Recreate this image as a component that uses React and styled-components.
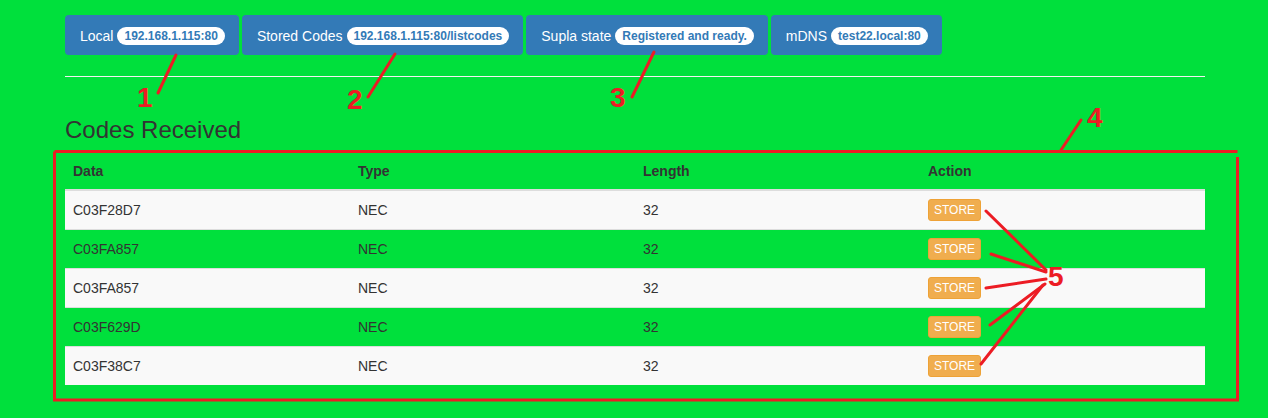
import React from "react";
import styled, { createGlobalStyle } from "styled-components";

const Global = createGlobalStyle`
  html, body { margin: 0; padding: 0; }
  body {
    background: #00e03c;
    font-family: "Liberation Sans", Arial, sans-serif;
    font-size: 14px;
    line-height: 20px;
    color: #333;
  }
`;

const Page = styled.div`
  position: relative;
  width: 1268px;
  height: 418px;
  overflow: hidden;
`;

const Container = styled.div`
  width: 1140px;
  margin-left: 65px;
  padding-top: 15px;
`;

const Nav = styled.div`
  display: flex;
  gap: 3px;
`;

const NavButton = styled.div`
  display: flex;
  align-items: center;
  gap: 4px;
  height: 40px;
  box-sizing: border-box;
  padding: 1px 14px 0 15px;
  background: #337ab7;
  border-radius: 4px;
  color: #fff;
  font-size: 14px;
  white-space: nowrap;
`;

const Badge = styled.span`
  display: inline-block;
  height: 18px;
  box-sizing: border-box;
  padding: 0 7px;
  margin-top: 1px;
  background: #fff;
  color: #337ab7;
  border-radius: 10px;
  font-size: 12px;
  font-weight: bold;
  line-height: 18px;
`;

const Rule = styled.hr`
  margin: 21px 0 0;
  border: 0;
  border-top: 1px solid #f2f2f2;
`;

const Title = styled.h3`
  margin: 40px 0 8px;
  font-size: 24px;
  font-weight: 500;
  line-height: 26.4px;
  color: #333;
`;

const Table = styled.table`
  width: 1140px;
  border-collapse: collapse;
  table-layout: fixed;
`;

const Th = styled.th`
  text-align: left;
  padding: 10px 8px 8px;
  line-height: 20px;
  font-weight: bold;
  border-bottom: 2px solid #dddddd;
`;

const Row = styled.tr`
  background: ${(p) => (p.$striped ? "#f9f9f9" : "transparent")};
`;

const Td = styled.td`
  padding: 8px;
  line-height: 22px;
  vertical-align: top;
  border-top: 1px solid #dddddd;
`;

const StoreButton = styled.span`
  display: inline-block;
  vertical-align: top;
  height: 22px;
  box-sizing: border-box;
  padding: 0 5px;
  background: #f0ad4e;
  border: 1px solid #eea236;
  border-radius: 3px;
  color: #fff;
  font-size: 12px;
  line-height: 20px;
`;

const Overlay = styled.svg`
  position: absolute;
  left: 0;
  top: 0;
  pointer-events: none;
`;

const Num = styled.text`
  font-family: "Liberation Sans", Arial, sans-serif;
  font-weight: bold;
  font-size: 28px;
  fill: #ec1c24;
`;

const links = [
  { label: "Local", value: "192.168.1.115:80" },
  { label: "Stored Codes", value: "192.168.1.115:80/listcodes" },
  { label: "Supla state", value: "Registered and ready." },
  { label: "mDNS", value: "test22.local:80" },
];

const codes = [
  ["C03F28D7", "NEC", "32"],
  ["C03FA857", "NEC", "32"],
  ["C03FA857", "NEC", "32"],
  ["C03F629D", "NEC", "32"],
  ["C03F38C7", "NEC", "32"],
];

const lines = [
  [176, 55, 158, 93],
  [395, 54, 368, 97],
  [654, 52, 632, 97],
  [1081, 120, 1061, 150],
  [986, 211, 1046, 270],
  [991, 254, 1046, 272],
  [986, 288, 1046, 279],
  [990, 325, 1045, 284],
  [981, 364, 1043, 285],
];

export default function App() {
  return (
    <>
      <Global />
      <Page>
        <Container>
          <Nav>
            {links.map((l) => (
              <NavButton key={l.label}>
                {l.label}
                <Badge>{l.value}</Badge>
              </NavButton>
            ))}
          </Nav>
          <Rule />
          <Title>Codes Received</Title>
          <Table>
            <thead>
              <tr>
                <Th>Data</Th>
                <Th>Type</Th>
                <Th>Length</Th>
                <Th>Action</Th>
              </tr>
            </thead>
            <tbody>
              {codes.map((c, i) => (
                <Row key={i} $striped={i % 2 === 0}>
                  <Td>{c[0]}</Td>
                  <Td>{c[1]}</Td>
                  <Td>{c[2]}</Td>
                  <Td>
                    <StoreButton>STORE</StoreButton>
                  </Td>
                </Row>
              ))}
            </tbody>
          </Table>
        </Container>
        <Overlay width="1268" height="418" viewBox="0 0 1268 418">
          <g stroke="#ec1c24" strokeWidth="3" fill="none" strokeLinecap="round">
            {lines.map((l, i) => (
              <line key={i} x1={l[0]} y1={l[1]} x2={l[2]} y2={l[3]} />
            ))}
          </g>
          <path
            d="M54.5 151.5 H1237.5 M1237.5 157 V400 H54.5 V151.5"
            stroke="#ec1c24"
            strokeWidth="3"
            fill="none"
          />
          <Num x="137" y="107">1</Num>
          <Num x="347" y="109">2</Num>
          <Num x="610" y="107">3</Num>
          <Num x="1087" y="127">4</Num>
          <Num x="1048" y="286">5</Num>
        </Overlay>
      </Page>
    </>
  );
}
